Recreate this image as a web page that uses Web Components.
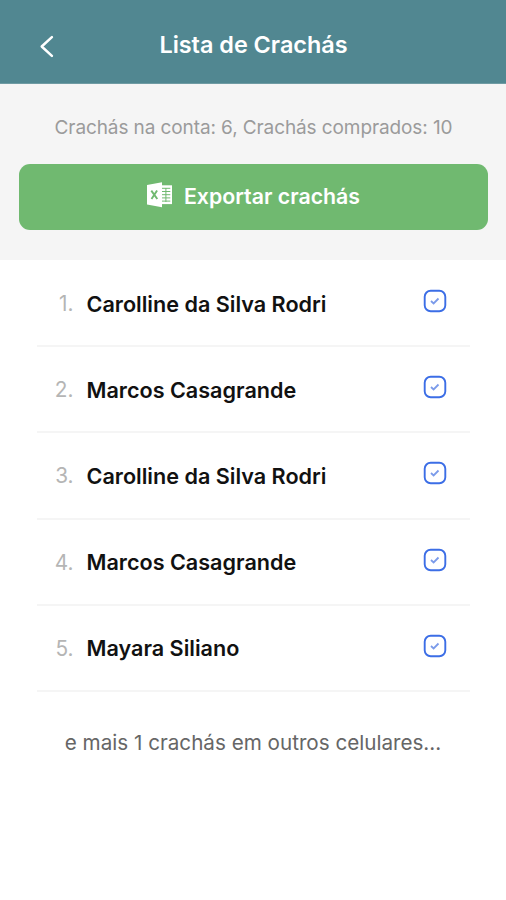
<!DOCTYPE html>
<html lang="pt-BR">
<head>
<meta charset="utf-8">
<title>Lista de Crachás</title>
<style>
body{margin:0;background:#fff;font-family:Inter,"Liberation Sans",sans-serif}
</style>
</head>
<body>
<badge-screen></badge-screen>
<script>
const define=(name,html)=>customElements.define(name,class extends HTMLElement{
  constructor(){super();this.attachShadow({mode:'open'}).innerHTML=html;}
});
define('nav-header',`<style>
:host{display:grid;grid-template-columns:34px 1fr 34px;align-items:center;height:84px;box-sizing:border-box;padding:6px 29px 0 30px;background:#518791;border-bottom:1px solid #6f9ba3;color:#fff}
h1{margin:0;font-size:23.4px;font-weight:600;line-height:28px;text-align:center;white-space:nowrap}
svg{display:block;margin-top:3px}
</style>
<svg width="34" height="28" viewBox="0 0 34 28"><path d="M21.900 5.200 11.700 14.500 21.900 23.800" fill="none" stroke="#fff" stroke-width="2.500" stroke-linecap="round" stroke-linejoin="round"/></svg>
<h1><slot></slot></h1><span></span>`);
define('account-summary',`<style>
:host{display:block;text-align:center;color:#9b9b9b;font-size:19px;letter-spacing:-.1px;line-height:24px;white-space:nowrap}
</style><span><slot></slot></span>`);
define('export-button',`<style>
:host{display:block}
button{display:flex;align-items:center;justify-content:center;gap:11px;width:100%;height:65.500px;border:0;border-radius:11px;background:#70b970;color:#fff;font:600 21.300px/28px Inter,"Liberation Sans",sans-serif;padding:0 0 1px;white-space:nowrap}
svg{margin-top:-2px}
</style>
<button><svg width="26" height="26" viewBox="0 0 26 26"><path d="M0 3 15 .2V25.200L0 22.400Z" fill="#fff"/><path d="M4.300 8.600 10.300 17M10.100 8.400 4.500 17" stroke="#70b970" stroke-width="1.900"/><path d="M15 3.300H25V22.100H15" fill="#fff"/><path d="M15 6.300H23.300M15 9.500H23.300M15 12.700H23.300M15 15.900H23.300M15 19.100H23.300M18.900 6V20" stroke="#70b970" stroke-width="1"/></svg><span><slot></slot></span></button>`);
define('check-badge',`<style>:host{display:block;width:24px;height:24px}svg{display:block}</style>
<svg width="24" height="24" viewBox="0 0 24 24"><rect x="1.700" y="1.700" width="20.600" height="20.600" rx="6" fill="none" stroke="#3c6ee6" stroke-width="1.900"/><path d="m8 12 2.600 2.400 4.900-4.900" fill="none" stroke="#7b9bea" stroke-width="1.800"/></svg>`);
define('badge-row',`<style>
:host{display:grid;grid-template-columns:36.500px 1fr 24px;column-gap:13px;align-items:center;height:86.200px;box-sizing:border-box;padding:0 23.500px 0 0;border-bottom:2px solid #f5f5f5;white-space:nowrap;line-height:28px}
.n{font-size:20.800px;color:#b5b5b5;text-align:right;padding-top:2px}
.t{font-size:21.600px;font-weight:600;color:#111;padding-top:1px}
check-badge{margin-top:-4px}
</style><span class="n"><slot name="n"></slot></span><span class="t"><slot></slot></span><check-badge></check-badge>`);
define('more-note',`<style>
:host{display:block;text-align:center;color:#666;font-size:20.650px;line-height:28px;white-space:nowrap}
</style><span><slot></slot></span>`);
define('badge-screen',`<style>
:host{display:block;width:506px;height:900px;overflow:hidden;background:#fff}
.top{background:#f5f5f5;height:176px;box-sizing:border-box;padding:32px 18px 0 19px}
export-button{margin-top:24px}
.list{padding:1px 36px 0 37px}
more-note{margin-top:37px}
</style>
<nav-header>Lista de Crachás</nav-header>
<div class="top"><account-summary>Crachás na conta: 6, Crachás comprados: 10</account-summary><export-button>Exportar crachás</export-button></div>
<div class="list">
<badge-row><span slot="n">1.</span>Carolline da Silva Rodri</badge-row>
<badge-row><span slot="n">2.</span>Marcos Casagrande</badge-row>
<badge-row><span slot="n">3.</span>Carolline da Silva Rodri</badge-row>
<badge-row><span slot="n">4.</span>Marcos Casagrande</badge-row>
<badge-row><span slot="n">5.</span>Mayara Siliano</badge-row>
</div>
<more-note>e mais 1 crachás em outros celulares...</more-note>`);
</script>
</body>
</html>
